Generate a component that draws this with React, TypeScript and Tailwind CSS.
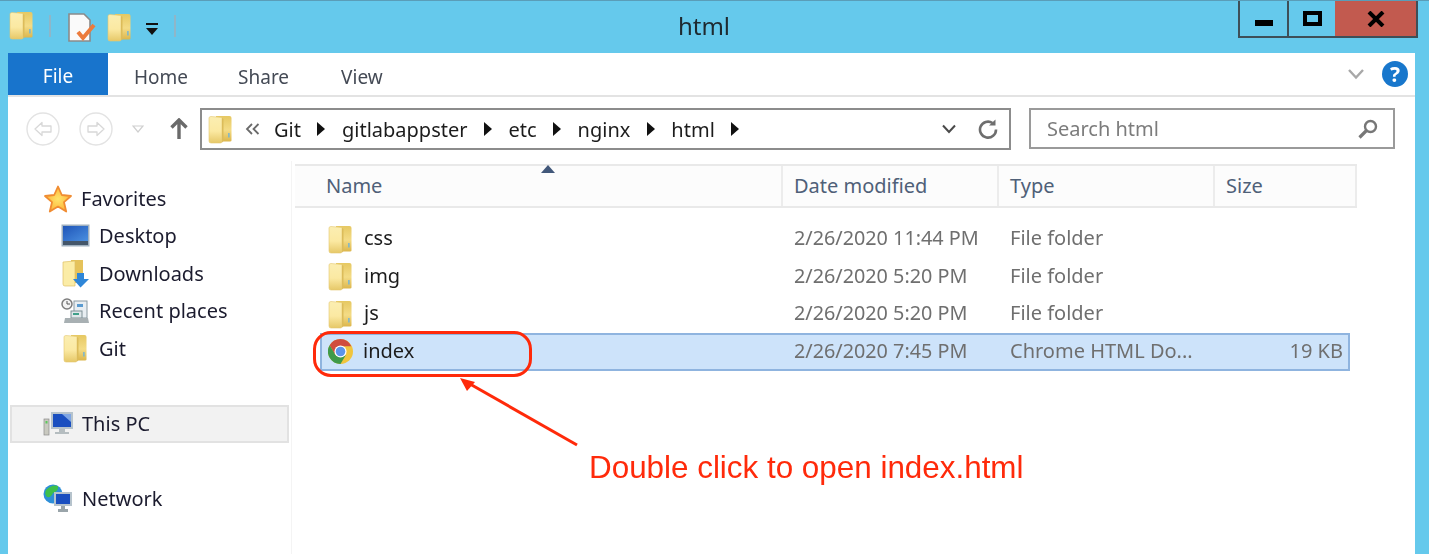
import React, { useId } from "react";

const sans = "font-['Noto_Sans','Open_Sans',sans-serif]";

function Folder({ className = "" }: { className?: string }) {
  const id = useId();
  return (
    <svg viewBox="0 0 24 29" className={className}>
      <defs>
        <linearGradient id={id + "a"} x1="0" y1="0" x2="0" y2="1">
          <stop offset="0" stopColor="#fbeeb2" />
          <stop offset="0.55" stopColor="#fbe9a2" />
          <stop offset="1" stopColor="#e6c868" />
        </linearGradient>
        <linearGradient id={id + "b"} x1="0" y1="0" x2="0" y2="1">
          <stop offset="0" stopColor="#e6c862" />
          <stop offset="0.55" stopColor="#f4dc86" />
          <stop offset="1" stopColor="#dcb64c" />
        </linearGradient>
      </defs>
      <path d="M8 1 H21.5 Q23.5 1 23.5 3 V25.5 Q23.5 26.5 22 26.5 H8 Z" fill={`url(#${id}b)`} />
      <path d="M1 3 Q1 1.5 3 1.5 L14 2.5 V26.5 Q14 28 12.5 28 H3 Q1 28 1 26 Z" fill={`url(#${id}a)`} stroke="#e4c870" strokeWidth="0.6" />
      <path d="M14 3 L15.5 4 V26 L14 27.5 Z" fill="#dcbc5a" />
      <rect x="20.2" y="18" width="1.4" height="4.5" fill="#6fb4d8" />
    </svg>
  );
}

function Chrome({ className = "" }: { className?: string }) {
  return (
    <svg viewBox="0 0 24 24" className={className}>
      <circle cx="12" cy="12" r="12" fill="#f0c53e" />
      <path d="M12 0 A12 12 0 0 0 1.6 6 L7 15 L12 7 H22.4 A12 12 0 0 0 12 0 Z" fill="#d04c3e" />
      <path d="M1.6 6 A12 12 0 0 0 12 24 L17 15.5 L7 15 Z" fill="#3f9a4a" />
      <circle cx="12" cy="12" r="5.8" fill="#fff" />
      <circle cx="12" cy="12" r="4.6" fill="#5c94ea" />
    </svg>
  );
}

function Star({ className = "" }: { className?: string }) {
  const id = useId();
  return (
    <svg viewBox="0 0 28 28" className={className}>
      <defs>
        <radialGradient id={id}>
          <stop offset="0" stopColor="#ffe46a" />
          <stop offset="1" stopColor="#fdb63a" />
        </radialGradient>
      </defs>
      <path d="M14 1.5 L17.8 10 L27 11 L20 17.2 L22.2 26.5 L14 21.6 L5.8 26.5 L8 17.2 L1 11 L10.2 10 Z" fill={`url(#${id})`} stroke="#f08c32" strokeWidth="1.8" strokeLinejoin="round" />
    </svg>
  );
}

function Monitor({ className = "" }: { className?: string }) {
  const id = useId();
  return (
    <svg viewBox="0 0 29 24" className={className}>
      <defs>
        <linearGradient id={id} x1="0" y1="0" x2="1" y2="1">
          <stop offset="0" stopColor="#1f55b8" />
          <stop offset="1" stopColor="#4a8fe0" />
        </linearGradient>
      </defs>
      <rect x="0.5" y="0.5" width="28" height="22" fill="#9fb0bf" />
      <rect x="2" y="2" width="25" height="15" fill={`url(#${id})`} />
      <rect x="2" y="17" width="25" height="4" fill="#44566a" />
    </svg>
  );
}

function DownloadsIcon({ className = "" }: { className?: string }) {
  return (
    <svg viewBox="0 0 28 29" className={className}>
      <path d="M9 1 H21 V24 H9 Z" fill="#e5c25a" />
      <path d="M1 3 L13 2 V27 H3 Q1 27 1 25 Z" fill="#fbeca6" stroke="#e0c066" strokeWidth="0.7" />
      <path d="M15 14 H22 V20 H27 L18.5 28.5 L11 20 H15 Z" fill="#2e86d8" />
    </svg>
  );
}

function RecentIcon({ className = "" }: { className?: string }) {
  return (
    <svg viewBox="0 0 29 26" className={className}>
      <rect x="13" y="3" width="13" height="17" fill="#e8eef2" stroke="#8a9aa2" />
      <rect x="16" y="6" width="6" height="3" fill="#5a9bd0" />
      <rect x="10" y="13" width="11" height="7" fill="#dfe7ea" stroke="#7e9096" />
      <rect x="12" y="15" width="6" height="2" fill="#3f9f8a" />
      <circle cx="6" cy="6" r="5" fill="#f2f2f2" stroke="#7c7c7c" strokeWidth="1.5" />
      <path d="M6 3 V6 H9" fill="none" stroke="#555" />
      <path d="M4 20 H27 L28 25 H3 Z" fill="#a8b0b3" />
    </svg>
  );
}

function PcIcon({ className = "" }: { className?: string }) {
  return (
    <svg viewBox="0 0 30 26" className={className}>
      <rect x="1" y="8" width="5" height="16" fill="#c9c9c0" stroke="#8c8c8c" strokeWidth="0.7" />
      <rect x="2.5" y="10" width="2" height="2.5" fill="#5cc85c" />
      <rect x="8" y="1" width="22" height="17" fill="#b6c3cc" />
      <rect x="10" y="3" width="18" height="13" fill="#1a4fc0" />
      <path d="M19 3 H28 V11 Z" fill="#7fa6e4" />
      <path d="M16 18 H22 V21 H26 V23 H12 V21 H16 Z" fill="#b5bdc0" />
    </svg>
  );
}

function NetworkIcon({ className = "" }: { className?: string }) {
  return (
    <svg viewBox="0 0 30 29" className={className}>
      <circle cx="10" cy="10" r="9.5" fill="#2e8fd8" />
      <path d="M3 6 Q9 0 15 2 Q16 7 10 9 Q8 14 4 13 Q1 10 3 6 Z" fill="#3ec04a" />
      <rect x="11" y="8" width="18" height="14" fill="#b6c3cc" />
      <rect x="13" y="10" width="14" height="10" fill="#1a4fc0" />
      <path d="M18 22 H22 V25 H25 V28 H15 V25 H18 Z" fill="#9aa5aa" />
    </svg>
  );
}

function NavCircle({ dir }: { dir: "l" | "r" }) {
  return (
    <svg viewBox="0 0 34 34" className="h-[34px] w-[34px] shrink-0">
      <circle cx="17" cy="17" r="16" fill="#fff" stroke="#e3e3e3" strokeWidth="1.4" />
      {dir === "l" ? (
        <path d="M9 17 L16 10.5 V14 H25 V20 H16 V23.5 Z" fill="#fff" stroke="#d8d8d8" strokeWidth="1.3" strokeLinejoin="round" />
      ) : (
        <path d="M25 17 L18 10.5 V14 H9 V20 H18 V23.5 Z" fill="#fff" stroke="#d8d8d8" strokeWidth="1.3" strokeLinejoin="round" />
      )}
    </svg>
  );
}

function Crumb({ children }: { children: React.ReactNode }) {
  return <span className="pt-[1px] text-[20px] leading-none text-[#1c1c1c]">{children}</span>;
}

function Sep() {
  return (
    <svg viewBox="0 0 10 14" className="mx-[15.5px] h-[14px] w-[10px] shrink-0">
      <path d="M1 0 L9 7 L1 14 Z" fill="#111" />
    </svg>
  );
}

function NavRow({ icon, label, left, selected }: { icon: React.ReactNode; label: string; left: string; selected?: boolean }) {
  return (
    <div className={`flex h-[37.5px] items-center ${left} ${selected ? "mx-[2px] border-2 border-[#e2e2e2] bg-[#f2f2f2]" : ""}`}>
      {icon}
      <span className="text-[20px] leading-none text-[#1b1b2e]">{label}</span>
    </div>
  );
}

const rows = [
  { name: "css", date: "2/26/2020 11:44 PM", type: "File folder" },
  { name: "img", date: "2/26/2020 5:20 PM", type: "File folder" },
  { name: "js", date: "2/26/2020 5:20 PM", type: "File folder" },
];

function FileRow({ icon, name, date, type, size, selected, gap }: { icon: React.ReactNode; name: string; date: string; type: string; size?: string; selected?: boolean; gap: string }) {
  return (
    <div className={`flex h-[37.5px] w-[1030px] items-center border-2 ${selected ? "border-[#8fb4df] bg-[#cde3fa]" : "border-transparent"}`}>
      <div className="flex w-[472px] shrink-0 items-center pl-[6px]">
        {icon}
        <span className={`${gap} pb-[2px] text-[20px] leading-none text-[#1c1c1c]`}>{name}</span>
      </div>
      <span className="w-[216px] shrink-0 pb-[2px] text-[19.8px] leading-none text-[#6f6f6f]">{date}</span>
      <span className="w-[216px] shrink-0 pb-[2px] text-[20px] leading-none text-[#6f6f6f]">{type}</span>
      <span className="flex-1 pb-[2px] pr-[5px] text-right text-[20px] leading-none text-[#6f6f6f]">{size}</span>
    </div>
  );
}

function Head({ label, w }: { label: string; w: string }) {
  return (
    <div className={`flex h-full items-center border-r-2 border-[#ececec] ${w}`}>
      <span className="pb-[1px] text-[20px] leading-none text-[#4f6078]">{label}</span>
    </div>
  );
}

export default function App() {
  return (
    <div className={`relative h-[554px] w-[1429px] overflow-hidden bg-[#65c9ec] ${sans}`}>
      <div className="blur-[0.4px]">
        {/* title bar */}
        <div className="flex h-[53px] border-t border-[#5a9db8]">
          <div className="flex w-[600px] items-start pl-[9px] pt-[10px]">
            <Folder className="h-[29px] w-[24px]" />
            <div className="ml-[16px] mt-[4px] h-[22px] w-[2px] bg-[#8fb6c8]" />
            <svg viewBox="0 0 28 30" className="ml-[17px] mt-[2px] h-[30px] w-[28px]">
              <path d="M1 1 H16 L22 7 V28 H1 Z" fill="#fafafa" stroke="#8a8a8a" strokeWidth="1.6" />
              <path d="M10 19 L15 25 L26 12" fill="none" stroke="#ec7b3c" strokeWidth="4" />
            </svg>
            <Folder className="ml-[11px] mt-[2px] h-[29px] w-[24px]" />
            <svg viewBox="0 0 14 14" className="ml-[14px] mt-[12px] h-[14px] w-[14px]">
              <rect x="1" y="0" width="12" height="2" fill="#111" />
              <path d="M1 5 H13 L7 12 Z" fill="#111" />
            </svg>
            <div className="ml-[15px] mt-[4px] h-[22px] w-[2px] bg-[#8fb6c8]" />
          </div>
          <div className="flex w-[208px] items-center justify-center pb-[3px]">
            <span className="text-[24px] leading-none text-[#1e2a30]">html</span>
          </div>
          <div className="flex flex-1 items-start justify-end pr-[11px]">
            <div className="flex h-[37px] w-[180px] border-x-2 border-b-2 border-[#3d4f58]">
              <div className="flex w-[49px] items-center justify-center border-r-2 border-[#3d4f58]">
                <div className="mt-[8px] h-[6px] w-[18px] bg-black" />
              </div>
              <div className="flex w-[46px] items-center justify-center">
                <div className="h-[15px] w-[19px] border-[4px] border-black" />
              </div>
              <div className="flex flex-1 items-center justify-center bg-[#c25a4f]">
                <svg viewBox="0 0 18 16" className="h-[16px] w-[18px]">
                  <path d="M2 1 L16 15 M16 1 L2 15" stroke="#000" strokeWidth="4" />
                </svg>
              </div>
            </div>
          </div>
        </div>

        {/* window body */}
        <div className="ml-[8px] flex h-[501px] w-[1407px] flex-col bg-white">
          {/* ribbon tabs */}
          <div className="flex h-[44px] shrink-0 items-center border-b-2 border-[#e3e3e3]">
            <div className="flex h-full w-[100px] items-center justify-center bg-[#1874cc] pt-[5px] text-[19px] text-white">File</div>
            <span className="ml-[26px] pt-[7px] text-[19px] leading-none text-[#444a55]">Home</span>
            <span className="ml-[50px] pt-[7px] text-[19px] leading-none text-[#444a55]">Share</span>
            <span className="ml-[52px] pt-[7px] text-[19px] leading-none text-[#444a55]">View</span>
            <div className="flex-1" />
            <svg viewBox="0 0 16 12" className="mr-[18px] h-[12px] w-[16px]">
              <path d="M1 2 L8 9.5 L15 2" fill="none" stroke="#a8a8a8" strokeWidth="2.4" />
            </svg>
            <div className="mr-[7px] flex h-[26px] w-[26px] items-center justify-center rounded-full bg-[#1877cc] text-[21px] font-bold leading-none text-white">?</div>
          </div>

          {/* address row */}
          <div className="flex h-[64px] shrink-0 items-start pt-[11px]">
            <div className="ml-[18px] mt-[4px] flex items-center">
              <NavCircle dir="l" />
              <div className="w-[19px]" />
              <NavCircle dir="r" />
              <svg viewBox="0 0 12 8" className="ml-[19px] h-[8px] w-[12px]">
                <path d="M1 1 H11 L6 7 Z" fill="#fff" stroke="#cfcfcf" strokeWidth="1.2" />
              </svg>
              <svg viewBox="0 0 18 22" className="ml-[26px] h-[22px] w-[18px]">
                <path d="M9 21 V2 M1.5 9.5 L9 2 L16.5 9.5" fill="none" stroke="#6a6a6a" strokeWidth="3.4" />
              </svg>
            </div>
            <div className="ml-[12px] flex h-[42px] w-[811px] items-center border-2 border-[#8c8c8c] pl-[6px]">
              <Folder className="h-[29px] w-[24px]" />
              <svg viewBox="0 0 15 12" className="ml-[13px] mr-[14px] h-[12px] w-[15px] shrink-0">
                <path d="M7 1 L2 6 L7 11 M13.5 1 L8.5 6 L13.5 11" fill="none" stroke="#6a6a6a" strokeWidth="1.8" />
              </svg>
              <Crumb>Git</Crumb>
              <Sep />
              <Crumb>gitlabappster</Crumb>
              <Sep />
              <Crumb>etc</Crumb>
              <Sep />
              <Crumb>nginx</Crumb>
              <Sep />
              <Crumb>html</Crumb>
              <Sep />
              <div className="flex-1" />
              <svg viewBox="0 0 14 10" className="mr-[22px] h-[10px] w-[14px]">
                <path d="M1 1.5 L7 8 L13 1.5" fill="none" stroke="#4a4a4a" strokeWidth="2" />
              </svg>
              <svg viewBox="0 0 20 20" className="mr-[11px] h-[20px] w-[20px]">
                <path d="M14.5 4 A8 8 0 1 0 18 10.5" fill="none" stroke="#6e6e6e" strokeWidth="2.6" />
                <path d="M11 6.5 H17.5 V0.5 Z" fill="#6e6e6e" />
              </svg>
            </div>
            <div className="ml-[18px] flex h-[41px] w-[366px] items-center justify-between border-2 border-[#9a9a9a] pl-[16px] pr-[15px]">
              <span className="pt-[1px] text-[20px] leading-none text-[#7c7c7c]">Search html</span>
              <svg viewBox="0 0 20 20" className="h-[20px] w-[20px]">
                <circle cx="12.5" cy="7.5" r="5.5" fill="none" stroke="#777" strokeWidth="2.4" />
                <path d="M8.5 11.5 L1.5 18.5" stroke="#777" strokeWidth="3.2" />
              </svg>
            </div>
          </div>

          {/* panes */}
          <div className="flex flex-1">
            <div className="flex w-[284px] shrink-0 flex-col border-r border-[#f4f4f4] pt-[19px]">
              <NavRow left="pl-[36px]" label="Favorites" icon={<Star className="mr-[9px] h-[28px] w-[28px]" />} />
              <NavRow left="pl-[53px]" label="Desktop" icon={<Monitor className="mr-[9px] h-[24px] w-[29px]" />} />
              <NavRow left="pl-[54px]" label="Downloads" icon={<DownloadsIcon className="mr-[9px] h-[29px] w-[28px]" />} />
              <NavRow left="pl-[53px]" label="Recent places" icon={<RecentIcon className="mr-[9px] h-[26px] w-[29px]" />} />
              <NavRow left="pl-[55px]" label="Git" icon={<Folder className="mr-[12px] h-[29px] w-[24px]" />} />
              <div className="h-[37.5px]" />
              <NavRow selected left="pl-[31px]" label="This PC" icon={<PcIcon className="mr-[9px] h-[26px] w-[30px]" />} />
              <div className="h-[37.5px]" />
              <NavRow left="pl-[35px]" label="Network" icon={<NetworkIcon className="mr-[9px] h-[29px] w-[30px]" />} />
            </div>

            <div className="flex flex-1 flex-col pl-[3px] pt-[3px]">
              <div className="relative flex h-[44px] w-[1062px] border-y-2 border-[#e9e9e9] bg-[#fcfcfc]">
                <Head label="Name" w="w-[488px] pl-[31px]" />
                <Head label="Date modified" w="w-[216px] pl-[11px]" />
                <Head label="Type" w="w-[216px] pl-[11px]" />
                <Head label="Size" w="flex-1 border-r-0 pl-[11px]" />
                <svg viewBox="0 0 14 8" className="absolute left-[246px] top-[-1px] h-[8px] w-[14px]">
                  <path d="M7 0 L14 8 H0 Z" fill="#42587a" />
                </svg>
              </div>
              <div className="ml-[25px] mt-[12.5px] flex flex-col">
                {rows.map((r) => (
                  <FileRow key={r.name} {...r} gap="ml-[12px]" icon={<Folder className="h-[29px] w-[24px]" />} />
                ))}
                <FileRow selected gap="ml-[10px]" name="index" date="2/26/2020 7:45 PM" type="Chrome HTML Do..." size="19 KB" icon={<Chrome className="h-[25px] w-[25px]" />} />
              </div>
            </div>
          </div>
        </div>
      </div>

      {/* annotation overlay */}
      <div className="absolute left-[313px] top-[331px] h-[46px] w-[219px] rounded-[18px] border-[3px] border-[#ff2a0a]" />
      <svg viewBox="0 0 1429 554" className="pointer-events-none absolute left-0 top-0 h-[554px] w-[1429px]">
        <path d="M577 445 L470 384" stroke="#ff2a0a" strokeWidth="3" />
        <path d="M460 378 L475 382 L467 391 Z" fill="#ff2a0a" />
      </svg>
      <span className="absolute left-[589px] top-[450px] font-['Liberation_Sans',sans-serif] text-[31.4px] leading-[36px] text-[#ff2a0a]">Double click to open index.html</span>
    </div>
  );
}
